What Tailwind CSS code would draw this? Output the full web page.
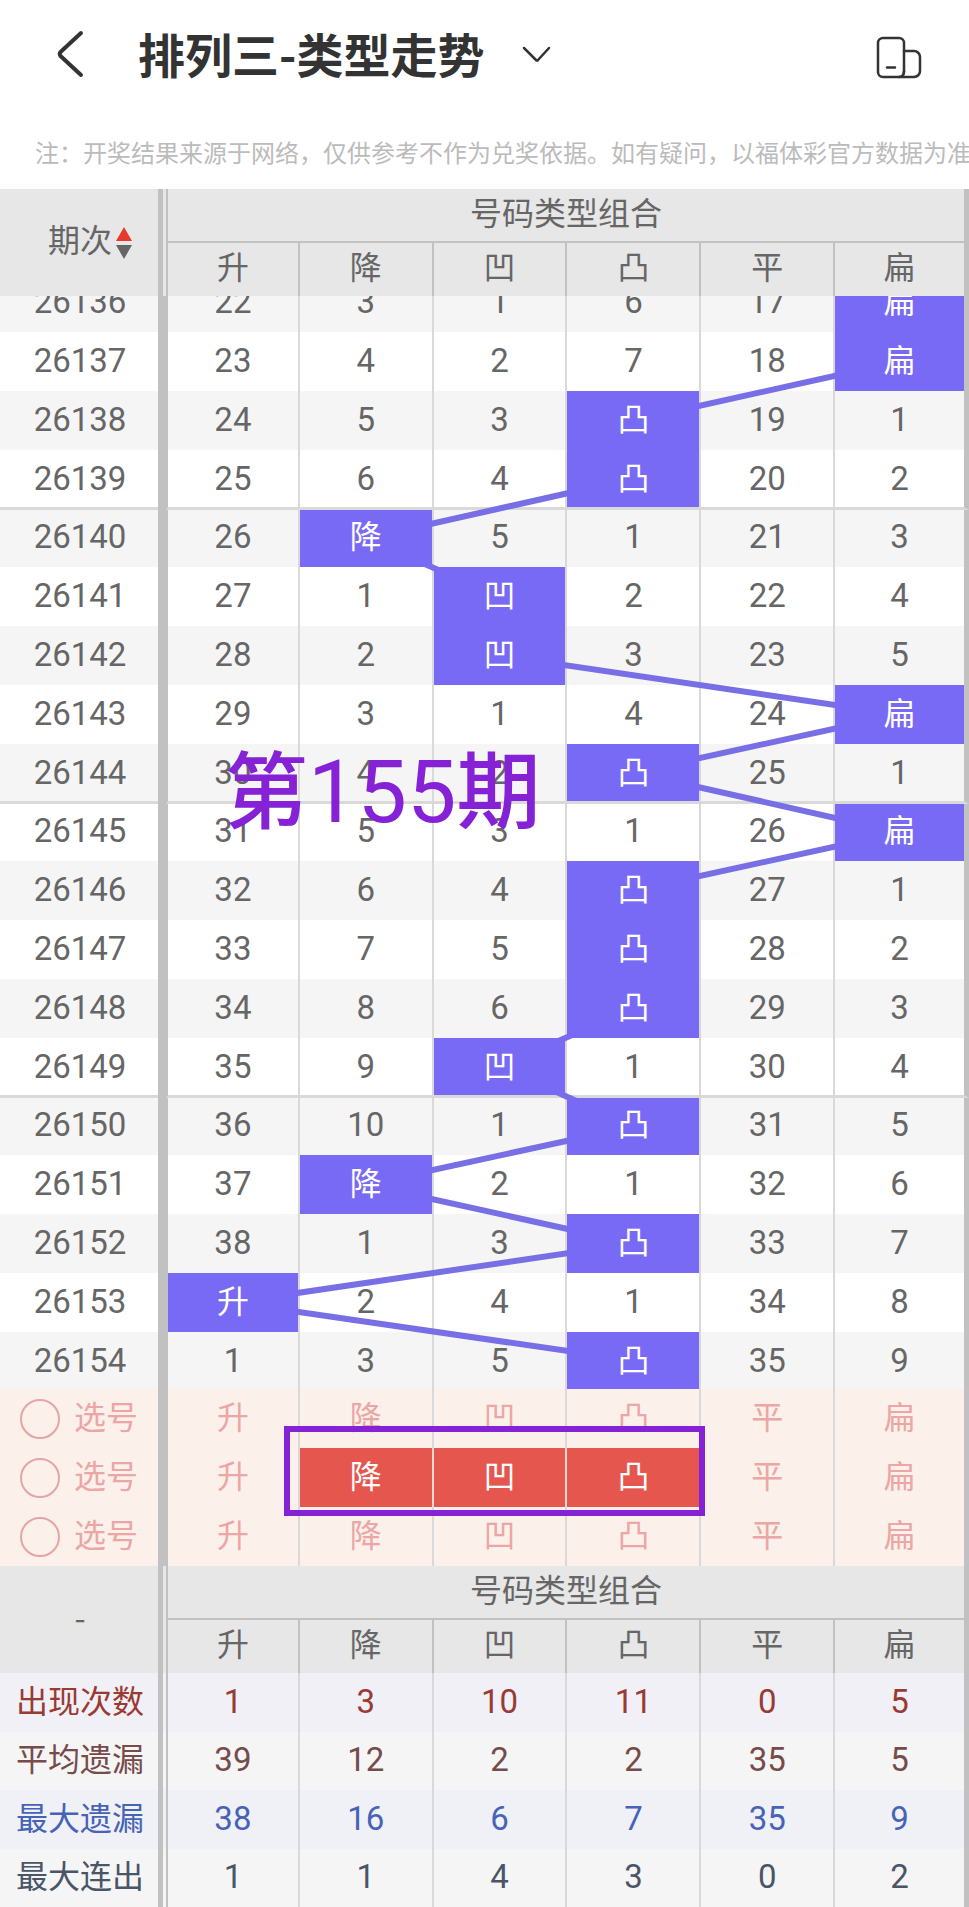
<!DOCTYPE html>
<html lang="zh-CN">
<head>
  <meta charset="UTF-8">
  <title>排列三-类型走势</title>
  <meta name="viewport" content="width=device-width, initial-scale=1.0">
  <script src="https://cdn.jsdelivr.net/npm/@tailwindcss/browser@4"></script>
</head>
<body class="bg-white text-[#666] font-['Roboto','Noto_Sans_CJK_SC',sans-serif] overflow-x-hidden">

  <header class="flex items-center h-[108px] pl-[54px] pr-[46px] text-[#333]">
    <button type="button" aria-label="返回" class="shrink-0">
      <svg class="w-8 h-12" viewBox="0 0 32 48" fill="none" stroke="currentColor" stroke-width="4" stroke-linecap="round" stroke-linejoin="round"><path d="M27 3 L6.500 22 Q5 24 6.500 26 L27 45"/></svg>
    </button>
    <h1 class="ml-[52px] pb-[2px] text-[47px] leading-[60px] font-bold whitespace-nowrap font-['Noto_Sans_CJK_SC',sans-serif]">排列三-类型走势</h1>
    <button type="button" aria-label="切换走势" class="ml-9 shrink-0">
      <svg class="w-8 h-5" viewBox="0 0 32 20" fill="none" stroke="currentColor" stroke-width="2.500" stroke-linecap="round" stroke-linejoin="round"><path d="M4 4 L16 16 Q17 17 18 16 L29 4"/></svg>
    </button>
    <button type="button" aria-label="横屏" class="ml-auto mt-2 shrink-0">
      <svg class="w-12 h-11" viewBox="0 0 48 44" fill="none" stroke="currentColor" stroke-width="2.500" stroke-linecap="round" stroke-linejoin="round">
        <rect x="3" y="2" width="26" height="39" rx="5"/>
        <path d="M29 15h10a6 6 0 0 1 6 6v14a6 6 0 0 1-6 6H24q5 0 5-6M12 31.500h8"/>
      </svg>
    </button>
  </header>

  <p class="h-[81px] pt-7 pl-[35px] text-2xl leading-9 text-[#bbb] whitespace-nowrap overflow-hidden">注：开奖结果来源于网络，仅供参考不作为兑奖依据。如有疑问，以福体彩官方数据为准</p>

  <main id="chart" class="relative">
    <table class="w-full table-fixed border-separate border-spacing-0 text-center text-[32px] leading-10">
      <colgroup>
        <col class="w-[158px]"><col class="w-2"><col><col><col><col><col><col>
      </colgroup>
      <thead id="head"></thead>
      <tbody id="rows"></tbody>
      <tbody id="picks"></tbody>
      <tbody id="head2"></tbody>
      <tbody id="stats"></tbody>
    </table>
    <svg id="lines" class="absolute inset-0 w-full h-full pointer-events-none" fill="none" stroke="#786ee6" stroke-width="6"></svg>
  </main>

  <script>
    const types = ["升", "降", "凹", "凸", "平", "扁"];

    // 期号, 六列数据（类型字表示当期开出）
    const data = [
      ["26136", 22, 3, 1, 6, 17, "扁"],
      ["26137", 23, 4, 2, 7, 18, "扁"],
      ["26138", 24, 5, 3, "凸", 19, 1],
      ["26139", 25, 6, 4, "凸", 20, 2],
      ["26140", 26, "降", 5, 1, 21, 3],
      ["26141", 27, 1, "凹", 2, 22, 4],
      ["26142", 28, 2, "凹", 3, 23, 5],
      ["26143", 29, 3, 1, 4, 24, "扁"],
      ["26144", 30, 4, 2, "凸", 25, 1],
      ["26145", 31, 5, 3, 1, 26, "扁"],
      ["26146", 32, 6, 4, "凸", 27, 1],
      ["26147", 33, 7, 5, "凸", 28, 2],
      ["26148", 34, 8, 6, "凸", 29, 3],
      ["26149", 35, 9, "凹", 1, 30, 4],
      ["26150", 36, 10, 1, "凸", 31, 5],
      ["26151", 37, "降", 2, 1, 32, 6],
      ["26152", 38, 1, 3, "凸", 33, 7],
      ["26153", "升", 2, 4, 1, 34, 8],
      ["26154", 1, 3, 5, "凸", 35, 9]
    ];

    const stats = [
      ["出现次数", [1, 3, 10, 11, 0, 5], "bg-[#f1f0f6] text-[#993a34]"],
      ["平均遗漏", [39, 12, 2, 2, 35, 5], "bg-[#f5f5f5] text-[#764b4a]"],
      ["最大遗漏", [38, 16, 6, 7, 35, 9], "bg-[#f0f0f7] text-[#4763b8]"],
      ["最大连出", [1, 1, 4, 3, 0, 2], "bg-[#f5f5f5] text-[#4a5568]"]
    ];

    // 列边框：首列带左线，末列为右侧粗边
    function edge(i, head) {
      if (i === 5) return "border-r-[5px] border-r-[#c1c1c1]";
      const first = i === 0 ? "border-l-2 border-l-[#c1c1c1] " : "";
      return first + (head ? "border-r-2 border-r-[#c1c1c1]" : "border-r-2 border-r-[#d9d9d9]");
    }

    function headRows(label) {
      return `
        <tr class="bg-[#e7e7e7]">
          <th rowspan="2" class="p-0 pb-1 font-normal">${label}</th>
          <td rowspan="2" class="p-0 border-l-[5px] border-[#c1c1c1]"></td>
          <th colspan="6" class="p-0 font-normal border-l-2 border-b-2 border-r-[5px] border-[#c1c1c1]"><div class="h-[52px] pb-[2px] flex items-center justify-center">号码类型组合</div></th>
        </tr>
        <tr class="bg-[#e7e7e7]">
          ${types.map((t, i) => `<th class="p-0 font-normal ${edge(i, true)}"><div class="h-[53px] pb-1 flex items-center justify-center">${t}</div></th>`).join("")}
        </tr>`;
    }

    document.getElementById("head").innerHTML = headRows(`
      <button type="button" class="flex items-center gap-1 ml-12">期次
        <svg class="w-4 h-8 mt-1" viewBox="0 0 16 32"><path d="M8 0 L16 14 H0Z" fill="#e63a2a"/><path d="M8 32 L16 18 H0Z" fill="#666"/></svg>
      </button>`);
    document.getElementById("head2").innerHTML = headRows(`<span class="pl-[2px] font-['Noto_Sans_CJK_SC',sans-serif]">-</span>`);

    document.getElementById("rows").innerHTML = data.map((row, n) => {
      const last = row[0].slice(-1);
      const line = last === "9" || (last === "4" && n < data.length - 1);
      const h = n === 0 ? "h-9" : /[4950]/.test(last) ? "h-[57px]" : "h-[59px]";
      const pad = /[49]/.test(last) ? "pb-2" : "pb-[10px]";
      const border = line ? "border-b-3 border-b-[#d9d9d9]" : "";
      const bg = row[0] % 2 ? "bg-white" : "bg-[#f5f5f5]";
      const mark = row[0] === "26144"
        ? `<div class="absolute z-20 left-14 top-0 leading-[96px] whitespace-nowrap text-[84px] font-medium text-[#8522d6]">第<span class="text-[88px] font-normal">155</span>期</div>` : "";
      const cells = row.slice(1).map((v, i) => {
        const hit = typeof v === "string";
        return `<td class="relative p-0 ${edge(i)} ${border}"><div class="${h} overflow-hidden flex items-end ${hit ? "hit relative z-10 bg-[#796af5] text-white text-[32px]" : "text-[33px]"}"><span class="w-full ${pad}">${v}</span></div>${i === 0 ? mark : ""}</td>`;
      }).join("");
      return `<tr class="${bg}">
        <th class="p-0 font-normal text-[33px] ${border}"><div class="${h} pl-[2px] overflow-hidden flex items-end"><span class="w-full ${pad}">${row[0]}</span></div></th>
        <td class="p-0 bg-[#c1c1c1]"></td>${cells}</tr>`;
    }).join("");

    document.getElementById("picks").innerHTML = [0, 1, 2].map(n => {
      const cells = types.map((t, i) => {
        const on = n === 1 && i > 0 && i < 4;
        const frame = n === 1 && i === 1
          ? `<div class="absolute z-20 -left-4 -top-[22px] h-[90px] w-[calc(300%+26px)] border-6 border-[#8522d6] pointer-events-none"></div>` : "";
        return `<td class="relative p-0 ${on ? "border-r-2 border-r-[#f9d9d3]" : edge(i)}"><button type="button" aria-pressed="${on}" class="w-full h-[59px] pb-[2px] flex items-center justify-center ${on ? "bg-[#e5564f] text-white" : ""}">${t}</button>${frame}</td>`;
      }).join("");
      return `<tr class="bg-[#fcf0ea] text-[#eba6a5]">
        <th class="p-0 font-normal"><label class="h-[59px] pl-5 flex items-center gap-[14px]"><input type="radio" name="pick" class="appearance-none w-10 h-10 rounded-full border-2 border-[#e3a5a5]"><span class="pb-[2px]">选号</span></label></th>
        <td class="p-0 bg-[#c1c1c1]"></td>${cells}</tr>`;
    }).join("");

    document.getElementById("stats").innerHTML = stats.map(([name, values, color], n) => {
      const h = n % 2 ? "h-[58px]" : "h-[59px]";
      return `<tr class="${color}">
        <th class="p-0 font-normal"><div class="${h} pl-[2px] pb-[2px] flex items-center justify-center">${name}</div></th>
        <td class="p-0 border-l-[5px] border-[#c1c1c1]"></td>
        ${values.map((v, i) => `<td class="p-0 text-[33px] ${edge(i)}"><div class="${h} pb-[2px] flex items-center justify-center">${v}</div></td>`).join("")}
      </tr>`;
    }).join("");

    // 走势连线
    function drawLines() {
      const box = document.getElementById("chart").getBoundingClientRect();
      const points = [...document.querySelectorAll(".hit")].map(el => {
        const r = el.getBoundingClientRect();
        return (r.left + r.width / 2 - box.left) + "," + (r.top + r.height / 2 - box.top);
      });
      document.getElementById("lines").innerHTML = `<polyline points="${points.join(" ")}"/>`;
    }
    window.addEventListener("load", drawLines);
    window.addEventListener("resize", drawLines);
  </script>
</body>
</html>
